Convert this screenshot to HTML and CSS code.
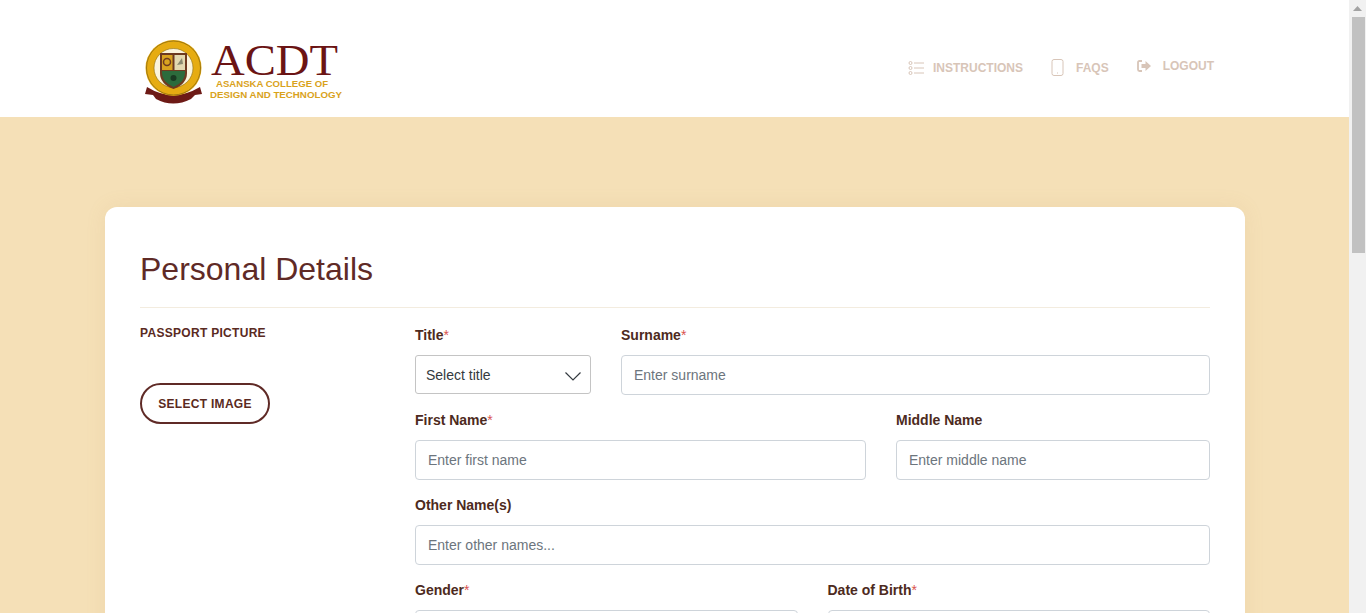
FILE: index.html
```html
<!DOCTYPE html>
<html lang="en">
<head>
<meta charset="utf-8">
<title>Personal Details</title>
<link rel="stylesheet" href="styles.css">
</head>
<body>
<div class="app">
  <div class="page">
    <header class="header">
      <a class="logo" href="#">
        <svg class="crest" width="60" height="68" viewBox="0 0 60 68">
          <path d="M3 50 L1 57 L9 58 L12 62 Q29 71 47 62 L51 58 L58 57 L56 50 Q29 66 3 50Z" fill="#6d1a16"/>
          <circle cx="29.500" cy="31" r="28" fill="#e6ac12"/>
          <circle cx="29.500" cy="31" r="27" fill="none" stroke="#8a6a10" stroke-width=".8"/>
          <circle cx="29.500" cy="31" r="19.500" fill="#fbf4dc" stroke="#8a6a10" stroke-width=".6"/>
          <path d="M16 16 H43 V36 Q43 47 29.500 52 Q16 47 16 36Z" fill="#6d3a20"/>
          <path d="M18 18 H28.500 V33 H18Z" fill="#d9a320"/>
          <path d="M30.500 18 H41 V33 H30.500Z" fill="#e3d9b0"/>
          <path d="M18 34 H41 V36 Q41 45 29.500 50 Q18 45 18 36Z" fill="#2c6b3c"/>
          <circle cx="23" cy="25" r="3.500" fill="none" stroke="#6d3a20" stroke-width="1.500"/>
          <path d="M33 28 L38 21 L39 27Z" fill="#8a8a70"/>
          <circle cx="29.500" cy="41" r="3" fill="#1a3a22"/>
        </svg>
        <svg class="wordmark" width="136" height="62" viewBox="0 0 136 62">
          <text class="wm-acdt" x="1" y="35" textLength="127" lengthAdjust="spacingAndGlyphs">ACDT</text>
          <text class="wm-sub" x="6" y="46.500" textLength="112" lengthAdjust="spacingAndGlyphs">ASANSKA COLLEGE OF</text>
          <text class="wm-sub" x="0" y="57.500" textLength="132" lengthAdjust="spacingAndGlyphs">DESIGN AND TECHNOLOGY</text>
        </svg>
      </a>
      <nav class="nav">
        <a class="nav-item" href="#">
          <svg width="16" height="16" viewBox="0 0 16 16" fill="none" stroke="currentColor" stroke-width="1">
            <circle cx="2.500" cy="3" r="1.500"/><circle cx="2.500" cy="8" r="1.500"/><circle cx="2.500" cy="13" r="1.500"/>
            <path d="M6 3H16M6 8H16M6 13H16"/>
          </svg>
          <span>INSTRUCTIONS</span>
        </a>
        <a class="nav-item" href="#">
          <svg width="13" height="17" viewBox="0 0 13 17" fill="none" stroke="currentColor" stroke-width="1">
            <rect x="1" y=".500" width="11" height="16" rx="2"/><path d="M6 14H7"/>
          </svg>
          <span>FAQS</span>
        </a>
        <a class="nav-item nav-up" href="#">
          <svg width="14" height="12" viewBox="0 0 14 12" fill="currentColor">
            <path d="M5 1H2.500Q1 1 1 2.500V9.500Q1 11 2.500 11H5" fill="none" stroke="currentColor" stroke-width="1.800"/>
            <path d="M4.500 4H8.500V1L14 6L8.500 11V8H4.500Z"/>
          </svg>
          <span>LOGOUT</span>
        </a>
      </nav>
    </header>
    <main class="band">
      <section class="card">
        <h1 class="card-title">Personal Details</h1>
        <div class="card-body">
          <aside class="passport">
            <div class="passport-label">PASSPORT PICTURE</div>
            <button class="btn-outline" type="button">SELECT IMAGE</button>
          </aside>
          <form class="form">
            <div class="row">
              <div class="field field-title">
                <label class="label">Title<span class="req">*</span></label>
                <div class="select-wrap">
                  <select class="select"><option>Select title</option></select>
                  <svg class="chevron" width="16" height="9" viewBox="0 0 16 9" fill="none" stroke="#343a40" stroke-width="1.200"><path d="M.500 .500L8 8L15.500 .500"/></svg>
                </div>
              </div>
              <div class="field grow">
                <label class="label">Surname<span class="req">*</span></label>
                <input class="input" placeholder="Enter surname">
              </div>
            </div>
            <div class="row">
              <div class="field field-first">
                <label class="label">First Name<span class="req">*</span></label>
                <input class="input" placeholder="Enter first name">
              </div>
              <div class="field grow">
                <label class="label">Middle Name</label>
                <input class="input" placeholder="Enter middle name">
              </div>
            </div>
            <div class="row">
              <div class="field grow">
                <label class="label">Other Name(s)</label>
                <input class="input" placeholder="Enter other names...">
              </div>
            </div>
            <div class="row">
              <div class="field half">
                <label class="label">Gender<span class="req">*</span></label>
                <input class="input" placeholder="">
              </div>
              <div class="field half">
                <label class="label">Date of Birth<span class="req">*</span></label>
                <input class="input" placeholder="">
              </div>
            </div>
          </form>
        </div>
      </section>
    </main>
  </div>
  <div class="scrollbar" aria-hidden="true">
    <svg class="scroll-arrow" width="9" height="5" viewBox="0 0 9 5"><path d="M4.500 0L9 5H0Z" fill="#a3a3a3"/></svg>
    <div class="scroll-thumb"></div>
  </div>
</div>
</body>
</html>
```
FILE: styles.css
```css
* { box-sizing: border-box; }
html, body { margin: 0; height: 100%; overflow: hidden; }
body { font-family: "Liberation Sans", Arial, sans-serif; color: #5a2a22; background: #f5e0b7; }
a { text-decoration: none; color: inherit; }

.app { display: flex; height: 613px; overflow: hidden; }
.page { width: 1349px; flex: none; height: 613px; overflow: hidden; }

.scrollbar { width: 17px; flex: none; background: #f1f1f1; display: flex; flex-direction: column; align-items: center; padding-top: 6px; }
.scroll-arrow { display: block; margin-left: 0; }
.scroll-thumb { width: 13px; height: 236px; margin-top: 6px; background: #c1c1c1; margin-left: 1px; }

.header { height: 117px; background: #fff; display: flex; align-items: flex-start; justify-content: space-between; padding: 37px 135px 0 144px; }
.logo { display: flex; align-items: flex-start; }
.crest { display: block; }
.wordmark { display: block; margin-left: 6px; margin-top: 3px; }
.wm-acdt { font-family: "Liberation Serif", serif; font-size: 44px; fill: #6b1414; }
.wm-sub { font-family: "Liberation Sans", sans-serif; font-weight: 700; font-size: 9.500px; fill: #d9a21b; }

.nav { display: flex; gap: 28px; align-items: center; margin-top: 22px; color: #d8c5b8; font-size: 12px; font-weight: 700; }
.nav-item { display: flex; align-items: center; gap: 9px; }
.nav-item:first-child { gap: 9px; }
.nav-item:nth-child(2) { gap: 12px; }
.nav-up { gap: 12px; transform: translateY(-2px); }

.band { padding: 90px 104px 0 105px; }
.card { width: 1140px; background: #fff; border-radius: 12px; padding: 35px; box-shadow: 0 0 20px rgba(190, 150, 90, .12); height: 600px; }
.card-title { margin: 0; height: 66px; font-size: 32px; line-height: 54px; font-weight: 400; color: #5f2a26; border-bottom: 1px solid #f3ecdf; }
.card-body { display: flex; padding-top: 17px; }

.passport { width: 275px; flex: none; }
.passport-label { font-size: 12px; line-height: 16px; font-weight: 700; letter-spacing: .3px; color: #5a2a22; }
.btn-outline { display: block; margin-top: 42px; width: 130px; height: 41px; border: 2px solid #5f2a26; border-radius: 21px; background: #fff; color: #5a2a22; font: 700 12px "Liberation Sans", Arial, sans-serif; letter-spacing: .3px; padding: 0; }

.form { flex: 1; display: flex; flex-direction: column; gap: 15px; }
.row { display: flex; gap: 30px; }
.field { display: flex; flex-direction: column; min-width: 0; }
.grow { flex: 1; }
.field-title { width: 176px; flex: none; }
.field-first { width: 451px; flex: none; }
.half { flex: 1; }
.label { height: 20px; margin-bottom: 10px; font-size: 14px; line-height: 20px; font-weight: 700; color: #4d2a20; }
.req { color: #d9534f; font-weight: 400; }
.input { display: block; width: 100%; height: 40px; border: 1px solid #ced4da; border-radius: 4px; padding: 0 12px; font: 14px "Liberation Sans", Arial, sans-serif; color: #495057; background: #fff; }
.input::placeholder { color: #6c757d; opacity: 1; }
.select-wrap { position: relative; height: 39px; }
.select { display: block; width: 100%; height: 39px; border: 1px solid #c4c4c4; border-radius: 3px; padding: 0 10px; font: 14px "Liberation Sans", Arial, sans-serif; color: #343a40; background: #fff; appearance: none; -webkit-appearance: none; }
.chevron { position: absolute; right: 10px; top: 17px; pointer-events: none; }
```
